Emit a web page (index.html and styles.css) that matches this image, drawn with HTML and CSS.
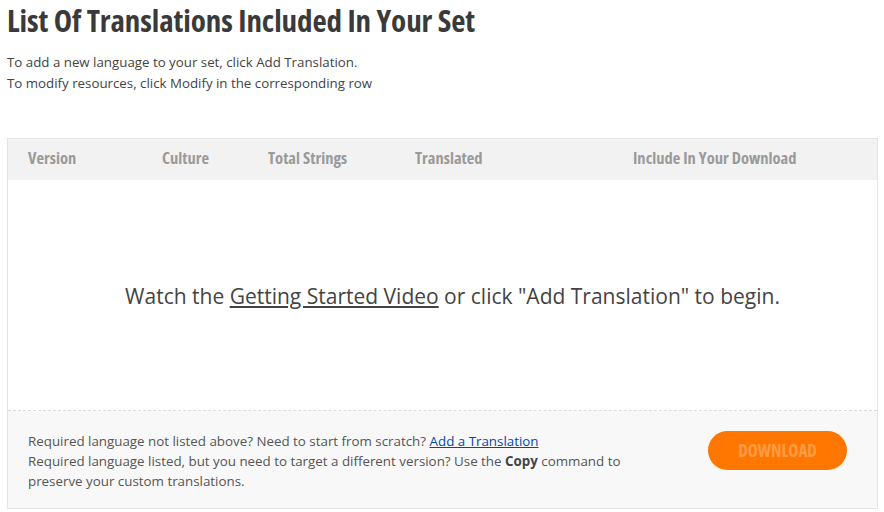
FILE: index.html
```html
<!DOCTYPE html>
<html>
<head>
<meta charset="utf-8">
<link rel="stylesheet" href="styles.css">
</head>
<body>
<div class="page">
  <h1 class="title">List Of Translations Included In Your Set</h1>
  <p class="intro">To add a new language to your set, click Add Translation.<br>To modify resources, click Modify in the corresponding row</p>
  <div class="table">
    <div class="thead">
      <span class="c1">Version</span>
      <span class="c2">Culture</span>
      <span class="c3">Total Strings</span>
      <span class="c4">Translated</span>
      <span class="c5">Include In Your Download</span>
    </div>
    <div class="tbody">
      <p class="empty">Watch the <a href="#" class="video">Getting Started Video</a> or click "Add Translation" to begin.</p>
    </div>
    <div class="tfoot">
      <p class="note">Required language not listed above? Need to start from scratch? <a href="#" class="add">Add a Translation</a><br>Required language listed, but you need to target a different version? Use the <b>Copy</b> command to<br>preserve your custom translations.</p>
      <button class="download">DOWNLOAD</button>
    </div>
  </div>
</div>
</body>
</html>
```
FILE: styles.css
```css
* { box-sizing: border-box; }
body { margin: 0; background: #fff; font-family: "Open Sans", "Noto Sans", sans-serif; color: #444; }
.page { padding: 0 6px 0 7px; }
.title {
  margin: 0; padding-top: 2px;
  font-size: 31px; line-height: 36px; font-weight: 700;
  font-stretch: 75%; color: #3a3a3a; letter-spacing: -0.08px;
}
.intro {
  margin: 14px 0 0 0; font-size: 13.3px; line-height: 21px; color: #444;
}
.table { margin-top: 44px; border: 1px solid #e4e4e4; }
.thead {
  background: #f2f2f2; height: 41px; display: flex; align-items: center;
  font-size: 16.5px; font-weight: 700; font-stretch: 75%; color: #9a9a9a;
  padding-bottom: 4px;
}
.thead span { display: block; }
.c1 { width: 154px; padding-left: 20px; }
.c2 { width: 106px; }
.c3 { width: 147px; }
.c4 { width: 218px; }
.tbody {
  height: 231px; display: flex; align-items: center; justify-content: center;
  border-bottom: 1px dashed #dcdcdc; background: #fff; padding-left: 20px;
}
.empty { margin: 0; font-size: 21px; color: #444; padding-top: 2px; }
.video { color: #444; }
.tfoot {
  background: #f8f8f8; height: 97px; display: flex; align-items: center;
  justify-content: space-between; padding: 0 30px 0 20px;
}
.note { margin: 0; font-size: 13.35px; line-height: 20px; color: #555; padding-top: 2px; }
.note b { color: #444; }
.add { color: #0645ad; }
.download {
  width: 139px; height: 39px; border: none; border-radius: 20px;
  background: #ff7700; color: #ff9c45; font-family: inherit;
  font-size: 17px; font-weight: 700; font-stretch: 75%; margin-top: -18px;
}
```
